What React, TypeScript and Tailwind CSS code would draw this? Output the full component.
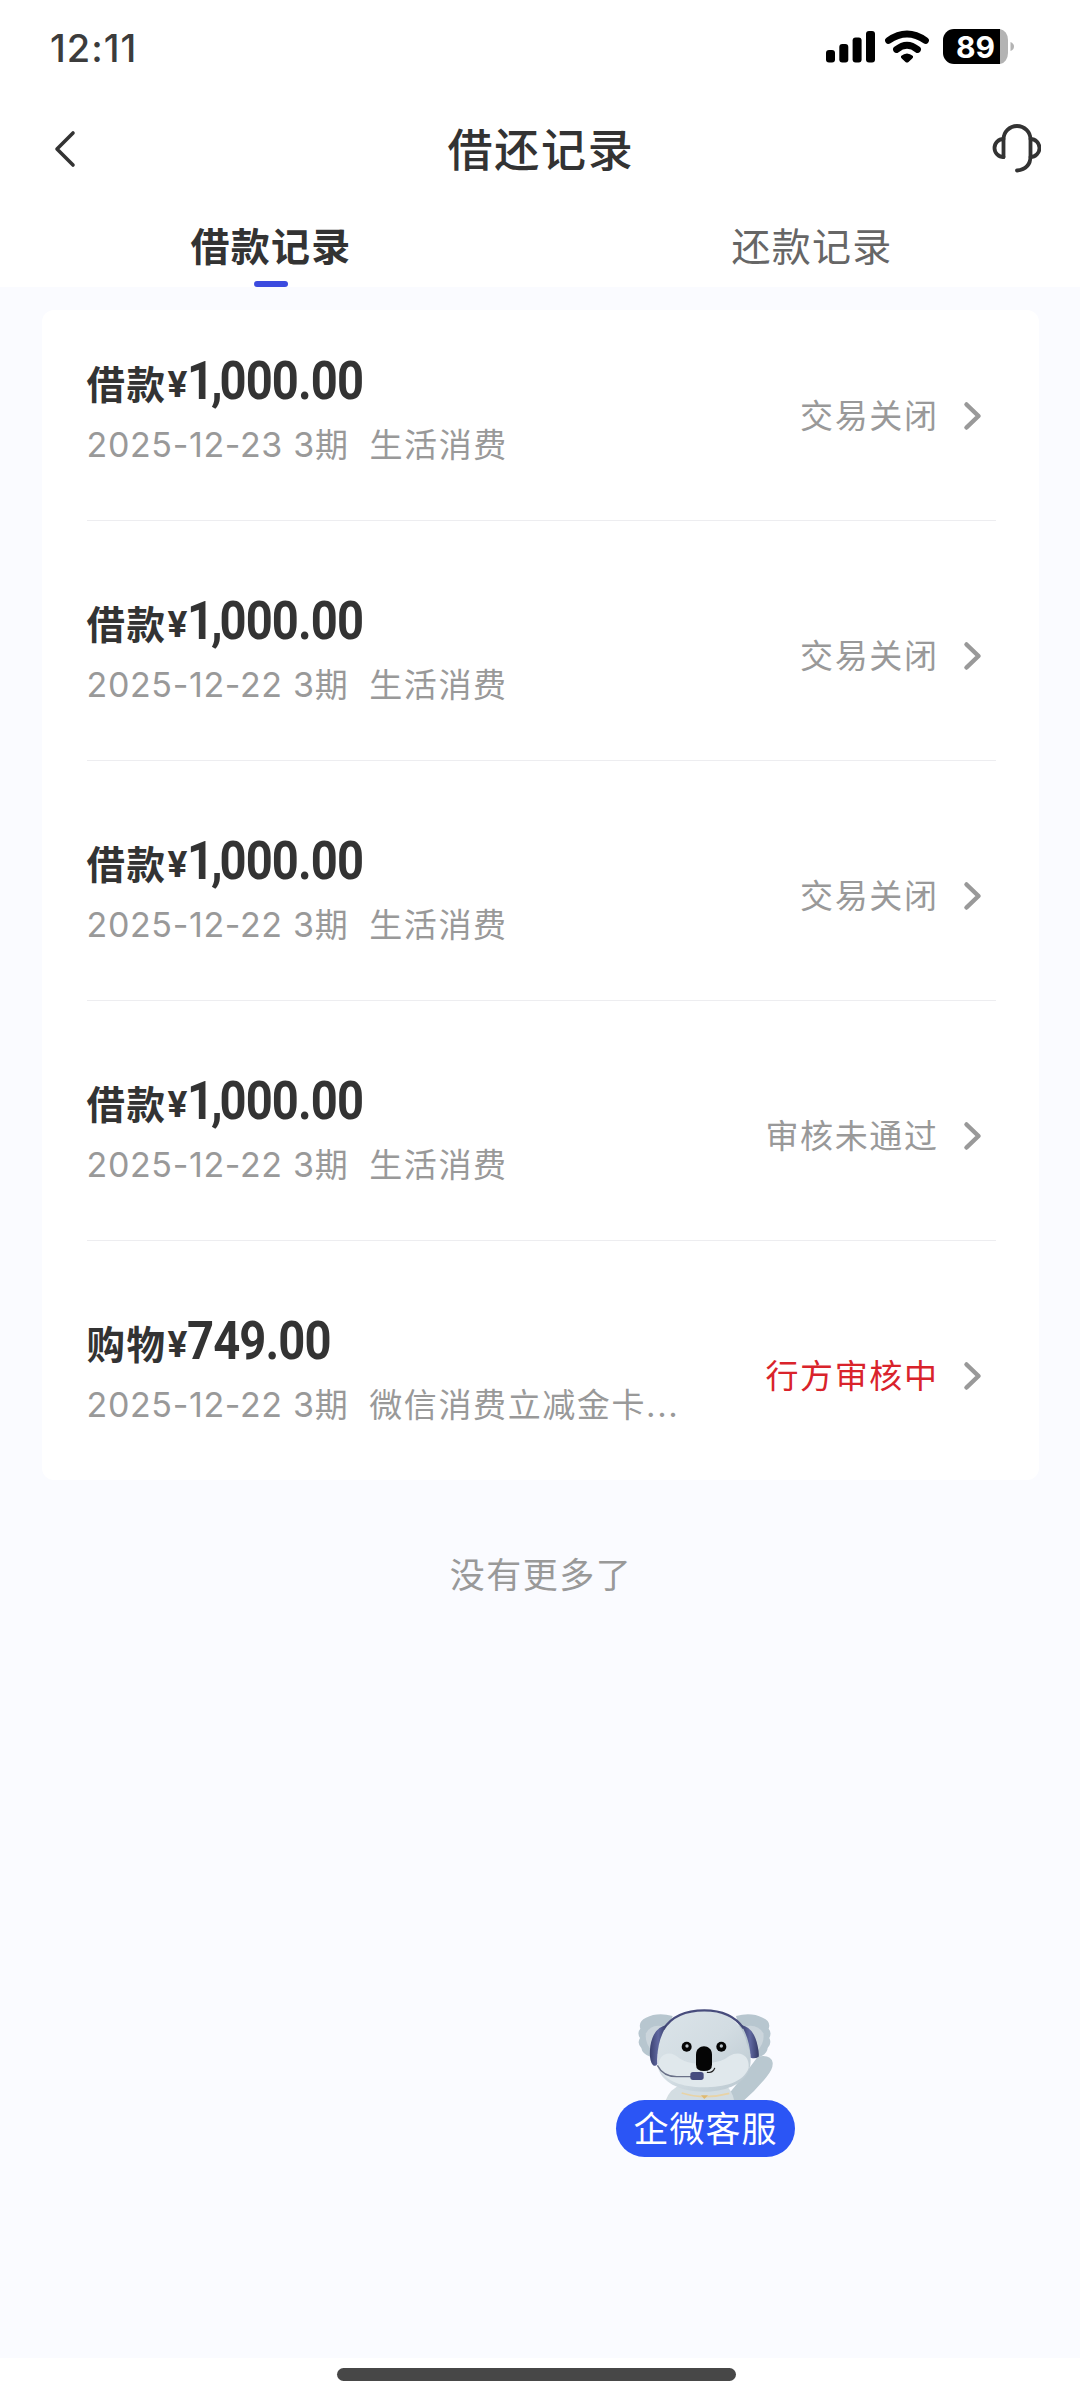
type RecordItem = {
  type: string;
  amount: string;
  date: string;
  scene: string;
  status: string;
  active?: boolean;
};

const records: RecordItem[] = [
  { type: "借款", amount: "1,000.00", date: "2025-12-23", scene: "生活消费", status: "交易关闭" },
  { type: "借款", amount: "1,000.00", date: "2025-12-22", scene: "生活消费", status: "交易关闭" },
  { type: "借款", amount: "1,000.00", date: "2025-12-22", scene: "生活消费", status: "交易关闭" },
  { type: "借款", amount: "1,000.00", date: "2025-12-22", scene: "生活消费", status: "审核未通过" },
  { type: "购物", amount: "749.00", date: "2025-12-22", scene: "微信消费立减金卡...", status: "行方审核中", active: true },
];

function StatusBar() {
  return (
    <div className="flex h-[92px] items-start justify-between pt-[26px] pr-[66px] pl-[50px]">
      <span className="text-[38px] leading-[44px] font-medium tracking-[1px] text-[#3c3c3c]">12:11</span>
      <svg className="mt-[3px]" width="188" height="36" viewBox="0 0 188 36">
        {/* signal */}
        <rect x="0" y="21" width="9" height="12.5" rx="3" />
        <rect x="13.3" y="15" width="9" height="18.5" rx="3" />
        <rect x="26.6" y="8.5" width="9" height="25" rx="3" />
        <rect x="40" y="2" width="9" height="31.5" rx="3" />
        {/* wifi */}
        <g fill="none" stroke="#000" strokeWidth="6.8" strokeLinecap="round">
          <path d="M62.5 11.5 Q81 -1.5 99.5 11.5" />
          <path d="M70.5 20.5 Q81 12 91.5 20.5" />
        </g>
        <path d="M75 27 Q81 22 87 27 Q87.5 28.5 86 29.7 L82.5 33 Q81 34.2 79.5 33 L76 29.7 Q74.5 28.5 75 27 Z" />
        {/* battery */}
        <path d="M128 0 H174 V35 H128 A11 11 0 0 1 117 24 V11 A11 11 0 0 1 128 0 Z" />
        <path d="M174 0 A9 11 0 0 1 182 11 V24 A9 11 0 0 1 174 35 Z" fill="#b3b3b3" />
        <path d="M184.5 13 Q188 14.5 188 17.5 Q188 20.5 184.5 22 Z" fill="#b3b3b3" />
        <text x="149.5" y="28.5" textAnchor="middle" fontSize="30" fontWeight="700" fill="#fff" fontFamily="Inter">
          89
        </text>
      </svg>
    </div>
  );
}

function Header() {
  return (
    <header className="flex h-[116px] items-start justify-between pr-[39px] pl-[54px]">
      <svg className="mt-[38px] mr-[14px]" width="22" height="38" viewBox="0 0 22 38" fill="none" stroke="#333" strokeWidth="3.6" strokeLinecap="round" strokeLinejoin="round">
        <path d="M19 3 L3 19 L19 35" />
      </svg>
      <h1 className="mt-[29px] text-[45px] leading-[60px] font-medium tracking-[1.8px] text-[#333]">借还记录</h1>
      <svg className="mt-[31px]" width="49" height="50" viewBox="0 0 49 50" fill="none" stroke="#333" strokeWidth="3.8" strokeLinecap="round" strokeLinejoin="round">
        <path d="M11.5 34 V16.5 A13.5 13.5 0 0 1 38.5 16.5 V33 Q38.5 46 25 47.5" />
        <path d="M11.5 16 A9 9 0 0 0 11.5 34" />
        <path d="M38.5 16 A9 9 0 0 1 38.5 34" />
      </svg>
    </header>
  );
}

function Tabs() {
  return (
    <nav className="grid h-[79px] grid-cols-2">
      <div className="flex flex-col items-center">
        <span className="mt-[13px] pl-[2px] text-[39px] leading-[52px] font-bold tracking-[1.2px] text-[#333]">借款记录</span>
        <span className="mt-[8px] ml-px h-[6px] w-[34px] rounded-full bg-[#3b4bdf]"></span>
      </div>
      <div className="flex flex-col items-center">
        <span className="mt-[13px] pl-[4px] text-[39px] leading-[52px] tracking-[1.2px] text-[#666]">还款记录</span>
      </div>
    </nav>
  );
}

function Amount({ value }: { value: string }) {
  const [head, tail] = value.includes(",") ? value.split(",") : ["", value];
  return (
    <span className="origin-left scale-x-[0.89] font-[Roboto] text-[53px] leading-[56px] font-bold tracking-[-1px]">
      {head && <span className="tracking-[-3.5px]">{head},</span>}
      {tail}
    </span>
  );
}

function RecordRow({ item }: { item: RecordItem }) {
  return (
    <li className="flex h-[240px] items-start justify-between border-t border-[#ededf0] pr-[13px]">
      <div className="flex flex-col pt-[72px]">
        <div className="flex h-[67px] items-start text-[#333]">
          <span className="mt-[3px] text-[38.5px] leading-[58px] font-bold tracking-[1.5px]">{item.type}</span>
          <span className="mt-[3px] ml-px font-[Roboto] text-[37px] leading-[58px] font-bold">¥</span>
          <Amount value={item.amount} />
        </div>
        <div className="flex h-[50px] items-center text-[33px] leading-[50px] tracking-[1.6px] whitespace-pre text-[#999]">
          <span className="text-[34px] tracking-[0.65px]">{item.date} 3</span>
          <span>期</span>
          <span className="ml-[20px]">{item.scene}</span>
        </div>
      </div>
      <div className="flex items-center pt-[110px]">
        <span className={`text-[33px] leading-[50px] tracking-[1.6px] ${item.active ? "text-[#d9232b]" : "text-[#999]"}`}>{item.status}</span>
        <svg className="ml-[24px]" width="20" height="30" viewBox="0 0 20 30" fill="none" stroke="#999" strokeWidth="4.5" strokeLinecap="round" strokeLinejoin="round">
          <path d="M3.5 3.5 L15.5 15 L3.5 26.5" />
        </svg>
      </div>
    </li>
  );
}

function Koala() {
  return (
    <svg width="140" height="95" viewBox="140 78 420 285">
      <defs>
        <linearGradient id="face" x1="0" y1="0" x2="1" y2="1">
          <stop offset="0" stopColor="#dbe4e9" />
          <stop offset="0.5" stopColor="#d2dce2" />
          <stop offset="1" stopColor="#b9c7cf" />
        </linearGradient>
        <linearGradient id="cup" x1="0" y1="0" x2="1" y2="0">
          <stop offset="0" stopColor="#3b4170" />
          <stop offset="0.5" stopColor="#6068a0" />
          <stop offset="1" stopColor="#343a66" />
        </linearGradient>
      </defs>
      {/* waving arm and body */}
      <path d="M420 340 Q480 265 505 230 Q545 222 550 248 Q552 266 532 290 Q500 330 462 363 H400 Z" fill="#b9c8d0" />
      <path d="M228 363 Q242 325 275 315 H410 Q430 335 435 363 Z" fill="#d3dde2" />
      {/* ears */}
      <path d="M250 108 Q205 95 170 113 Q146 124 153 146 Q142 158 152 174 Q142 190 156 204 Q158 222 186 232 L215 215 Z" fill="#b7c6cf" />
      <path d="M440 108 Q485 95 520 113 Q546 124 538 146 Q548 158 540 174 Q548 190 535 204 Q534 222 508 232 L470 215 Z" fill="#b7c6cf" />
      <path d="M225 140 Q185 130 170 160 Q165 190 190 215 Z" fill="#cbd5dc" />
      <path d="M465 140 Q505 130 522 160 Q527 190 502 215 Z" fill="#cbd5dc" />
      {/* head */}
      <path d="M345 93 C420 93 462 135 472 190 C485 215 488 250 478 272 C460 315 405 335 342 335 C280 335 225 312 208 270 C202 245 204 190 220 160 C242 115 285 93 345 93 Z" fill="url(#face)" />
      <path d="M208 262 C204 225 240 205 270 235 Q300 255 345 250 Q395 250 420 228 C450 210 482 225 478 264 C462 308 405 322 342 322 C280 322 225 304 208 262 Z" fill="#e0e8ec" />
      {/* collar */}
      <path d="M277 339 Q345 360 420 340" fill="none" stroke="#e8d3a6" strokeWidth="5" />
      <path d="M335 346 L345 357 L356 346 Z" fill="#dfb970" />
      {/* face */}
      <circle cx="292" cy="200" r="15" fill="#050505" />
      <circle cx="396" cy="200" r="15" fill="#050505" />
      <circle cx="293" cy="198" r="5" fill="#b9c2c7" />
      <circle cx="396" cy="198" r="5" fill="#b9c2c7" />
      <path d="M320 224 C320 190 368 190 368 224 V254 Q368 273 344 273 Q320 273 320 254 Z" fill="#050505" />
      <path d="M354 277 Q370 280 376 265" fill="none" stroke="#222" strokeWidth="3.5" strokeLinecap="round" />
      {/* headset */}
      <path d="M222 148 Q258 91 345 91 Q425 91 463 145" fill="none" stroke="#474c7c" strokeWidth="7" />
      <path d="M232 135 Q192 143 183 198 Q178 240 190 254 Q198 262 204 252 Q200 190 232 135 Z" fill="url(#cup)" />
      <path d="M456 135 Q494 143 505 198 Q510 222 508 230 Q497 238 484 233 Q482 180 456 135 Z" fill="url(#cup)" />
      <path d="M204 256 Q222 290 262 290 H305" fill="none" stroke="#6a7188" strokeWidth="4" />
      <rect x="303" y="276" width="40" height="24" rx="8" fill="#474d80" />
    </svg>
  );
}

export default function App() {
  return (
    <div className="relative flex h-[2400px] w-[1080px] flex-col overflow-hidden bg-white font-[Inter,'Noto_Sans_CJK_SC',sans-serif]">
      <StatusBar />
      <Header />
      <Tabs />

      <main className="flex flex-1 flex-col items-center bg-[#fafbff] pt-[23px]">
        <ul className="h-[1170px] w-[997px] overflow-hidden rounded-[12px] bg-white pr-[43px] pl-[45px]">
          <div className="-mt-[30px]">
            {records.map((item, i) => (
              <RecordRow key={i} item={item} />
            ))}
          </div>
        </ul>
        <p className="mt-[70px] pl-[2px] text-[35px] leading-[50px] tracking-[1.5px] text-[#999]">没有更多了</p>
      </main>

      {/* home indicator */}
      <footer className="flex h-[42px] justify-center bg-white pt-[10px] pr-[7px]">
        <div className="h-[13px] w-[399px] rounded-full bg-[#474747]"></div>
      </footer>

      {/* floating customer service */}
      <div className="absolute top-[2006px] left-[616px] flex w-[179px] flex-col items-center">
        <Koala />
        <div className="-mt-[1px] flex h-[57px] w-full items-center justify-center rounded-full bg-[#2b55f5] pt-[2px] text-[35px] leading-[57px] tracking-[1px] text-white">企微客服</div>
      </div>
    </div>
  );
}
